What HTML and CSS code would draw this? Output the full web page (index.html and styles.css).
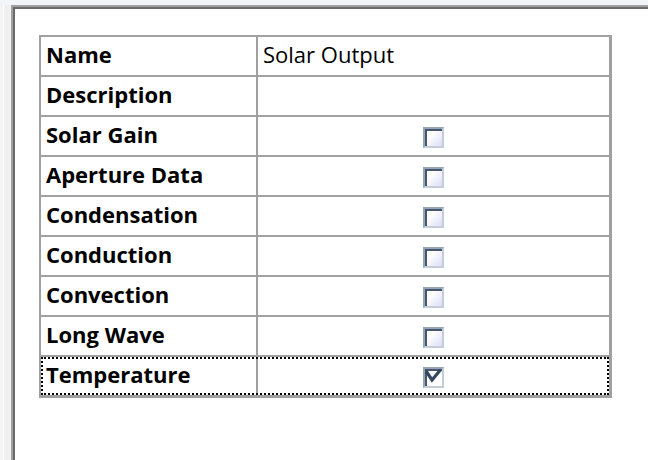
FILE: index.html
```html
<!DOCTYPE html>
<html>
	<head>
		<meta charset="utf-8" />
		<title>Solar Output</title>
		<link rel="stylesheet" href="styles.css">
	</head>
	<body>
		<div class="topbar"></div>
		<div class="main">
			<div class="side"></div>
			<div class="pane">
				<table class="props">
					<tr>
						<td class="label">Name</td>
						<td class="value">Solar Output</td>
					</tr>
					<tr>
						<td class="label">Description</td>
						<td class="value"></td>
					</tr>
					<tr>
						<td class="label">Solar Gain</td>
						<td class="value check"><span class="box"></span></td>
					</tr>
					<tr>
						<td class="label">Aperture Data</td>
						<td class="value check"><span class="box"></span></td>
					</tr>
					<tr>
						<td class="label">Condensation</td>
						<td class="value check"><span class="box"></span></td>
					</tr>
					<tr>
						<td class="label">Conduction</td>
						<td class="value check"><span class="box"></span></td>
					</tr>
					<tr>
						<td class="label">Convection</td>
						<td class="value check"><span class="box"></span></td>
					</tr>
					<tr>
						<td class="label">Long Wave</td>
						<td class="value check"><span class="box"></span></td>
					</tr>
					<tr class="selected">
						<td class="label">Temperature</td>
						<td class="value check">
							<span class="box checked">
								<svg width="17" height="17" viewBox="0 0 17 17">
									<polyline points="2,3.5 7,11 14.5,2" fill="none" stroke="#33475e" stroke-width="3.2" stroke-linejoin="miter" stroke-linecap="square" />
								</svg>
							</span>
						</td>
					</tr>
				</table>
			</div>
		</div>
	</body>
</html>
```

FILE: styles.css
```css
* {
	box-sizing: border-box;
}

html,
body {
	height: 100%;
}

body {
	margin: 0;
	font-family: "Open Sans", "Noto Sans", sans-serif;
	font-size: 22px;
	color: #000;
	background-color: #fff;
	display: flex;
	flex-direction: column;
	overflow: hidden;
}

.topbar {
	height: 5px;
	background-color: #f1f5fa;
	flex: none;
}

.main {
	flex: 1;
	display: flex;
}

.side {
	width: 11px;
	background-color: #f0f0f0;
	border-left: 3px solid #f4f4f4;
	box-shadow: inset 1px 0 #fff;
}

.pane {
	flex: 1;
	border-top: 2px solid #a0a0a0;
	border-left: 2px solid #a0a0a0;
	box-shadow: inset 2px 2px #696969;
	padding: 28px 0 0 26px;
}

.props {
	width: 573px;
	table-layout: fixed;
	border-collapse: separate;
	border-spacing: 0;
	border-top: 2px solid #a0a0a0;
	border-left: 2px solid #a0a0a0;
	border-right: 3px solid #a0a0a0;
	border-bottom: 3px solid #a0a0a0;
}

.props td {
	height: 40px;
	line-height: 34px;
	padding: 0 0 4px 5px;
	border-bottom: 2px solid #a0a0a0;
	white-space: nowrap;
}

.props tr:last-child td {
	height: 38px;
	border-bottom: none;
}

.props .label {
	width: 217px;
	font-weight: bold;
	border-right: 2px solid #a0a0a0;
}

.props .check {
	text-align: center;
	padding: 0;
	line-height: 38px;
}

.selected {
	outline: 2px dotted #000;
	outline-offset: -2px;
}

.box {
	display: inline-block;
	width: 21px;
	height: 21px;
	vertical-align: middle;
	margin-top: -3px;
	border: 2px solid;
	border-color: #97a4b8 #c3ccd9 #c3ccd9 #97a4b8;
	box-shadow: inset 2px 2px #44576f;
	background: linear-gradient(135deg, #ffffff 35%, #dcdcf7 100%);
}

.box.checked {
	background: #fff;
}

.box svg {
	display: block;
}
```
